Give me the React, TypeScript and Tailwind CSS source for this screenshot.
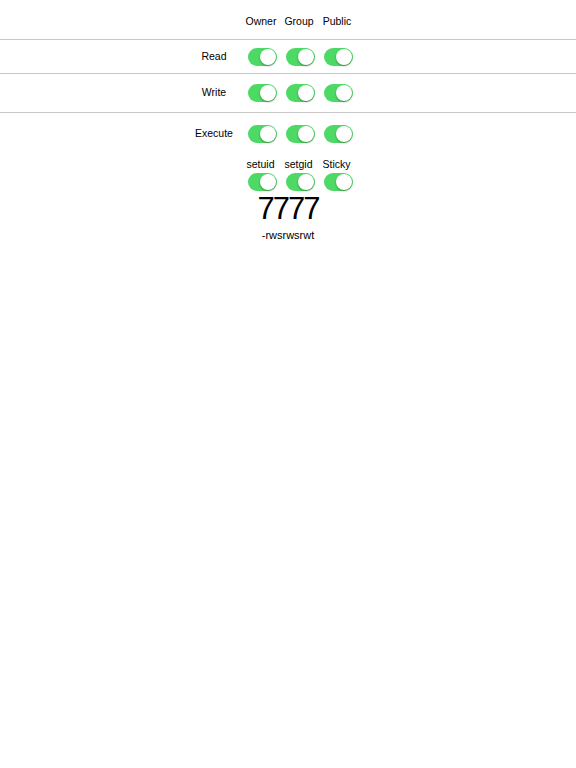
import React from "react";

const font = { fontFamily: '"Liberation Sans", Arial, sans-serif' };

function Toggle() {
  return (
    <div className="relative w-[29px] h-[18px] rounded-full bg-[#4cd964]">
      <div className="absolute right-[1px] top-[1px] w-[16px] h-[16px] rounded-full bg-white shadow-[0_1px_2px_rgba(0,0,0,0.35)]" />
    </div>
  );
}

function Row({ label, h, border }: { label: string; h: string; border: boolean }) {
  return (
    <div className={`flex items-center pl-[185px] ${h} ${border ? "border-b border-[#c8c8c8]" : ""}`}>
      <div className="w-[58px] text-center text-[10.5px] text-black">{label}</div>
      {[0, 1, 2].map((i) => (
        <div key={i} className="w-[38px] flex justify-center">
          <Toggle />
        </div>
      ))}
    </div>
  );
}

export default function App() {
  return (
    <div className="w-[576px] h-[768px] bg-white text-black" style={font}>
      <div className="flex items-center pl-[242px] h-[40px] border-b border-[#c8c8c8] pt-[5px]">
        {["Owner", "Group", "Public"].map((t) => (
          <div key={t} className="w-[38px] text-center text-[10.5px]">
            {t}
          </div>
        ))}
      </div>
      <Row label="Read" h="h-[34px]" border />
      <Row label="Write" h="h-[39px]" border />
      <Row label="Execute" h="h-[41px]" border={false} />
      <div className="flex pl-[243px] mt-[4px]">
        {["setuid", "setgid", "Sticky"].map((t) => (
          <div key={t} className="w-[38px] flex flex-col items-center">
            <div className="text-[10.5px] leading-[13px] pr-[3px]">{t}</div>
            <div className="mt-[2px]">
              <Toggle />
            </div>
          </div>
        ))}
      </div>
      <div className="text-center text-[31px] leading-[36px] tracking-[-2px]">7777</div>
      <div className="text-center text-[11px] leading-[14px] mt-[1px]">-rwsrwsrwt</div>
    </div>
  );
}
